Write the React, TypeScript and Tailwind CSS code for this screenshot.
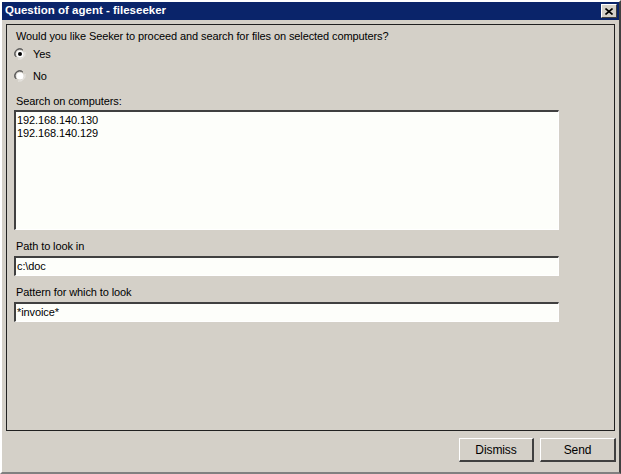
import { useState } from 'react';

const font = { fontFamily: '"Liberation Sans", Arial, sans-serif' };

function Radio({ checked, label, onClick }: { checked: boolean; label: string; onClick: () => void }) {
  return (
    <div className="flex items-center h-[22px] cursor-default" onClick={onClick}>
      <svg width="12" height="12" viewBox="0 0 12 12" className="ml-[7px]">
        <path d="M8 1.1A5.5 5.5 0 0 0 1.1 8" stroke="#808080" fill="none" />
        <path d="M9 2.2A4.5 4.5 0 0 0 2.2 9" stroke="#404040" fill="none" />
        <path d="M10.9 4A5.5 5.5 0 0 1 4 10.9" stroke="#ffffff" fill="none" />
        <path d="M9.8 3A4.5 4.5 0 0 1 3 9.8" stroke="#d4d0c8" fill="none" />
        <circle cx="6" cy="6" r="3.6" fill="#ffffff" />
        {checked && <circle cx="6" cy="6" r="2" fill="#000000" />}
      </svg>
      <span className="ml-[7px] text-[11px] text-black">{label}</span>
    </div>
  );
}

function Field({ value }: { value: string }) {
  return (
    <div className="w-[545px] h-[20px] ml-[7px] border-t-2 border-l-2 border-t-[#404040] border-l-[#404040] border-b border-r border-b-white border-r-white bg-[#fdfefa] flex items-center px-[1px] text-[11px] text-black">
      {value}
    </div>
  );
}

export default function App() {
  const [yes, setYes] = useState(true);

  return (
    <div className="w-[621px] h-[474px] bg-[#d4d0c8] border-t-2 border-l-2 border-t-white border-l-white border-r-2 border-b-2 border-r-[#404040] border-b-[#808080] flex flex-col select-none tracking-[-0.1px]" style={font}>
      <div className="h-[18px] bg-[#0a246a] flex items-center justify-between pl-[3px] pr-[2px]">
        <span className="text-white font-bold text-[11.5px] tracking-normal">Question of agent - fileseeker</span>
        <div className="w-[16px] h-[14px] bg-[#d4d0c8] border-t border-l border-t-white border-l-white border-b border-r border-b-[#404040] border-r-[#404040] flex items-center justify-center">
          <svg width="8" height="7" viewBox="0 0 8 7">
            <path d="M0.5 0.5L7.5 6.5M7.5 0.5L0.5 6.5" stroke="#000" strokeWidth="1.6" />
          </svg>
        </div>
      </div>

      <div className="flex-1 flex flex-col px-[4px] pt-[4px] pb-[12px]">
        <div className="flex-1 border border-[#202020] flex flex-col pt-[4px]">
          <div className="ml-[9px] h-[14px] text-[11px] leading-[14px] text-black">
            Would you like Seeker to proceed and search for files on selected computers?
          </div>
          <Radio checked={yes} label="Yes" onClick={() => setYes(true)} />
          <Radio checked={!yes} label="No" onClick={() => setYes(false)} />
          <div className="ml-[9px] mt-[7px] h-[14px] text-[11px] leading-[14px] text-black">Search on computers:</div>
          <div className="w-[545px] h-[120px] ml-[7px] mt-[2px] border-t-2 border-l-2 border-t-[#404040] border-l-[#404040] border-b border-r border-b-white border-r-white bg-[#fdfefa] px-[1px] pt-[2px] text-[11px] leading-[13px] text-black">
            <div>192.168.140.130</div>
            <div>192.168.140.129</div>
          </div>
          <div className="ml-[9px] mt-[9px] h-[14px] text-[11px] leading-[14px] text-black">Path to look in</div>
          <div className="mt-[3px]">
            <Field value="c:\doc" />
          </div>
          <div className="ml-[9px] mt-[9px] h-[14px] text-[11px] leading-[14px] text-black">Pattern for which to look</div>
          <div className="mt-[3px]">
            <Field value="*invoice*" />
          </div>
        </div>
      </div>

      <div className="h-[24px] flex justify-end gap-[6px] pr-[3px] mb-[10px] -mt-[5px]">
        <button className="w-[75px] h-[24px] border-t border-l border-t-white border-l-white border-b-2 border-r-2 border-b-[#404040] border-r-[#404040] bg-[#d4d0c8] text-[12px] text-black">
          Dismiss
        </button>
        <button className="w-[76px] h-[24px] border-t border-l border-t-white border-l-white border-b-2 border-r-2 border-b-[#404040] border-r-[#404040] bg-[#d4d0c8] text-[12px] text-black">
          Send
        </button>
      </div>
    </div>
  );
}
